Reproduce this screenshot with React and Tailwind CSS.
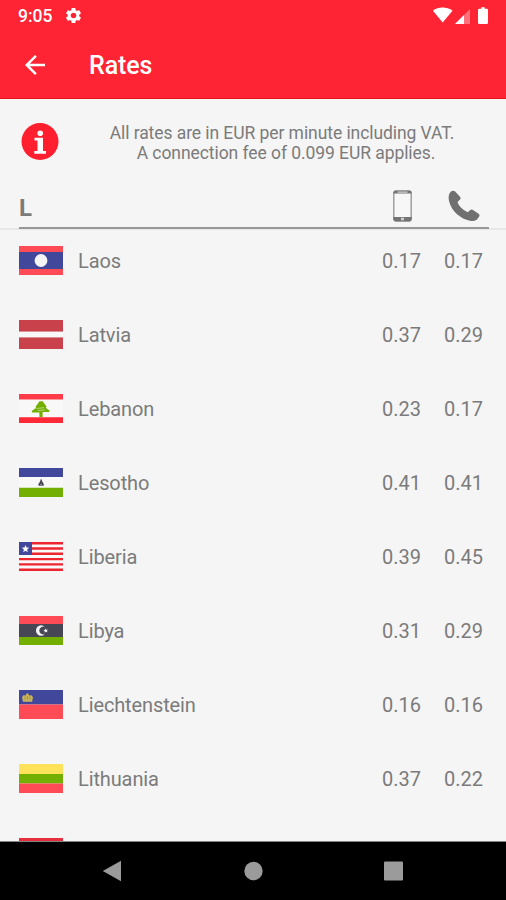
import { MdArrowBack, MdSettings } from 'react-icons/md'

const RED = '#ff4b55'
const BLUE = '#41479b'
const GREEN = '#73af00'

const FLAGS = {
  laos: (
    <>
      <path fill={RED} d="M0 0h44v29H0z" />
      <path fill={BLUE} d="M0 6h44v17H0z" />
      <circle cx="22" cy="14.5" r="6.4" fill="#f5f5f5" />
    </>
  ),
  latvia: (
    <>
      <path fill="#c8414b" d="M0 0h44v11.7H0zM0 17.3h44V29H0z" />
      <path fill="#f8f8f8" d="M0 11.7h44v5.6H0z" />
    </>
  ),
  lebanon: (
    <>
      <path fill="#f8f8f8" d="M0 0h44v29H0z" />
      <path fill="#ff3c48" d="M0 0h44v5.6H0z" />
      <path fill="#ff2836" d="M0 23.2h44V29H0z" />
      <path fill={GREEN} d="M20.5 7.2h3.2l3.800 5.300-.6 1.500 3.700 2.500-.6 1.500h-6.400v5h-3.200v-4.500h-7.200l-.6-1.500 4.400-3-.4-1.300z" />
      <path stroke="#e2efcf" strokeWidth=".6" fill="none" d="M17.500 14.500l7.500-.8M19 16.500l7-.6" />
    </>
  ),
  lesotho: (
    <>
      <path fill="#f8f8f8" d="M0 0h44v29H0z" />
      <path fill={BLUE} d="M0 0h44v9H0z" />
      <path fill={GREEN} d="M0 19.7h44V29H0z" />
      <path fill="#464655" d="M21.7 11.2h.9l.5 2 1.9 3.400-.6 1.100h-4.600l-.6-1.100 2-3.400z" />
      <path fill="#b5b5bd" d="M21.500 16h1.300v.9h-1.300z" />
    </>
  ),
  liberia: (
    <>
      <path fill="#f8f8f8" d="M0 0h44v29H0z" />
      <path fill="#ee252f" d="M0 0h44v2.6H0zM0 5.3h44v2.4H0zM0 10.6h44v2.4H0zM0 15.9h44v2.4H0zM0 21.2h44v2.4H0zM0 26.5h44V29H0z" />
      <path fill={BLUE} d="M0 0h13v13H0z" />
      <path fill="#fff" d="M6.5 3l1 2.5 2.8.2-2.2 1.8.7 2.7-2.3-1.5-2.3 1.5.7-2.7-2.2-1.8 2.8-.2z" />
    </>
  ),
  libya: (
    <>
      <path fill={RED} d="M0 0h44v8H0z" />
      <path fill="#464655" d="M0 8h44v13H0z" />
      <path fill={GREEN} d="M0 21h44v8H0z" />
      <path fill="#f5f5f5" d="M25.8 10.8a5.2 5.2 0 1 0 0 7.4 4 4 0 1 1 0-7.4z" />
      <path fill="#f5f5f5" d="M26.2 12.6l.9 1.2 1.8-.3-1 1.2.7 1.5-1.6-.5-1.3 1.1v-1.7l-1.5-.7 1.6-.5z" />
    </>
  ),
  liechtenstein: (
    <>
      <path fill={BLUE} d="M0 0h44v14.5H0z" />
      <path fill={RED} d="M0 14.5h44V29H0z" />
      <path fill="#c8b45a" d="M4 11.8L3 7.200l1.400-2 2.300.4.900-2.100h1.600l1 2.100 2.300-.4 1.500 2-.9 4.600z" />
      <path stroke="#8d8355" strokeWidth=".7" d="M6 6.500v3M8.500 6v3.500M11 6.500v3" />
    </>
  ),
  lithuania: (
    <>
      <path fill="#ffe15a" d="M0 0h44v10H0z" />
      <path fill={GREEN} d="M0 10h44v9.5H0z" />
      <path fill={RED} d="M0 19.5h44V29H0z" />
    </>
  ),
  luxembourg: <path fill="#e62e3c" d="M0 0h44v10H0z" />,
}

const RATES = [
  { flag: 'laos', name: 'Laos', mobile: '0.17', landline: '0.17' },
  { flag: 'latvia', name: 'Latvia', mobile: '0.37', landline: '0.29' },
  { flag: 'lebanon', name: 'Lebanon', mobile: '0.23', landline: '0.17' },
  { flag: 'lesotho', name: 'Lesotho', mobile: '0.41', landline: '0.41' },
  { flag: 'liberia', name: 'Liberia', mobile: '0.39', landline: '0.45' },
  { flag: 'libya', name: 'Libya', mobile: '0.31', landline: '0.29' },
  { flag: 'liechtenstein', name: 'Liechtenstein', mobile: '0.16', landline: '0.16' },
  { flag: 'lithuania', name: 'Lithuania', mobile: '0.37', landline: '0.22' },
  { flag: 'luxembourg' },
]

function StatusBar() {
  return (
    <div className="flex h-8 items-center pl-[18px] pr-4 text-white">
      <span className="w-[46px] text-[17.5px] font-medium leading-8">9:05</span>
      <MdSettings className="mb-px size-[19px]" />
      <svg className="ml-auto" width="58" height="18" viewBox="0 0 58 18" fill="currentColor">
        <path d="M1 3.800C6-.600 15-.600 20.500 3.800L10.700 15.500z" />
        <path d="M23 17L38 2v15z" opacity=".35" />
        <path d="M23 17L32 8v9z" />
        <path d="M49.300.300h3.400v1.500h2q1.300 0 1.300 1.300v12.600q0 1.300-1.300 1.300h-7.400q-1.300 0-1.300-1.300V3.100q0-1.300 1.300-1.300h2z" />
      </svg>
    </div>
  )
}

function RateRow({ flag, name, mobile, landline }) {
  return (
    <div className="flex h-[60px] shrink-0 items-center pl-[19px] pr-[23px] text-[20px]">
      <svg className="mr-[15px] shrink-0" width="44" height="29" viewBox="0 0 44 29">{FLAGS[flag]}</svg>
      <span className="grow pt-px tracking-[-0.12px]">{name}</span>
      <span className="w-[62px] pt-px">{mobile}</span>
      <span className="w-[39px] pt-px">{landline}</span>
    </div>
  )
}

export default function App() {
  return (
    <div className="flex h-[900px] w-[506px] flex-col overflow-hidden bg-[#f5f5f5] font-['Roboto',sans-serif] text-[#7b7b7b]">
      <header className="h-[99px] shrink-0 border-b border-[#e3131f] bg-[#ff2433]">
        <StatusBar />
        <div className="flex h-[66px] items-center pl-[20px] text-white">
          <MdArrowBack className="size-[30px]" />
          <h1 className="ml-[39px] pt-px text-[25px] font-medium leading-none tracking-[-0.1px]">Rates</h1>
        </div>
      </header>

      <section className="flex h-[86px] shrink-0 items-center pl-[21px] pr-[16px]">
        <svg width="38" height="38" viewBox="0 0 38 38">
          <circle cx="19" cy="18.500" r="18.500" fill="#ff1f2e" />
          <circle cx="19.200" cy="10.200" r="2.800" fill="#fff" />
          <path fill="#fff" d="M13.500 14.800h8.500v13.200h3v2.800H13.300v-2.800h3.200V17.600h-3z" />
        </svg>
        <p className="grow pl-[15px] pt-0.5 text-center text-[17.5px] leading-5 tracking-[-0.07px]">
          All rates are in EUR per minute including VAT.<br />
          <span className="pl-2">A connection fee of 0.099 EUR applies.</span>
        </p>
      </section>

      <div className="h-[45px] shrink-0 border-b-2 border-[#e7e7e7] pl-[19px] pr-[17px]">
        <div className="-mb-0.5 flex h-11 items-center border-b-2 border-[#989898]">
          <span className="grow pt-[3px] text-[24px] font-bold leading-none">L</span>
          <svg className="mr-[35px]" width="20" height="32" viewBox="0 0 20 32">
            <rect x=".8" y="1.300" width="17.400" height="29.400" rx="2" fill="#f7f7f7" stroke="#999" strokeWidth="1.400" />
            <path fill="#747474" d="M2.300.600h14.400q1.800 0 2.100 3H.2Q.4.600 2.300.600zM.2 27h18.600q-.1 4.500-2.100 4.500H2.300Q.3 31.500.2 27z" />
            <path fill="#d0d0d0" d="M4.500 1.600h10v1.200h-10zM8 27.800h3v2.400H8z" />
          </svg>
          <svg className="mr-[9px]" width="32" height="32" viewBox="0 0 32 32">
            <path fill="#707070" d="M3.300 1.300Q5.800-.2 7.600 1.900L12 6.800q1.200 1.500 0 2.700L9.600 12Q9.600 13.800 12.400 17T19.800 22.200L22 20.200q1.200-1.100 2.600-.4l6 3.900q1.500 1.100.5 2.900Q28.500 31.800 23 31C13 29.500 3 21 .9 10.500Q-.2 4 3.300 1.300z" />
          </svg>
        </div>
      </div>

      <main className="flex h-[612px] shrink-0 flex-col gap-y-[14px] overflow-hidden border-b border-[#858585]">
        {RATES.map(rate => <RateRow key={rate.flag} {...rate} />)}
      </main>

      <nav className="flex grow items-center bg-black pl-[102px] text-[#9b9b9b]">
        <svg width="302" height="22" viewBox="0 0 302 22" fill="currentColor">
          <path d="M.8 11L19 .8v20.400z" />
          <circle cx="151.500" cy="11" r="9.200" />
          <rect x="282" y="1.500" width="19" height="19" rx="1" />
        </svg>
      </nav>
    </div>
  )
}
